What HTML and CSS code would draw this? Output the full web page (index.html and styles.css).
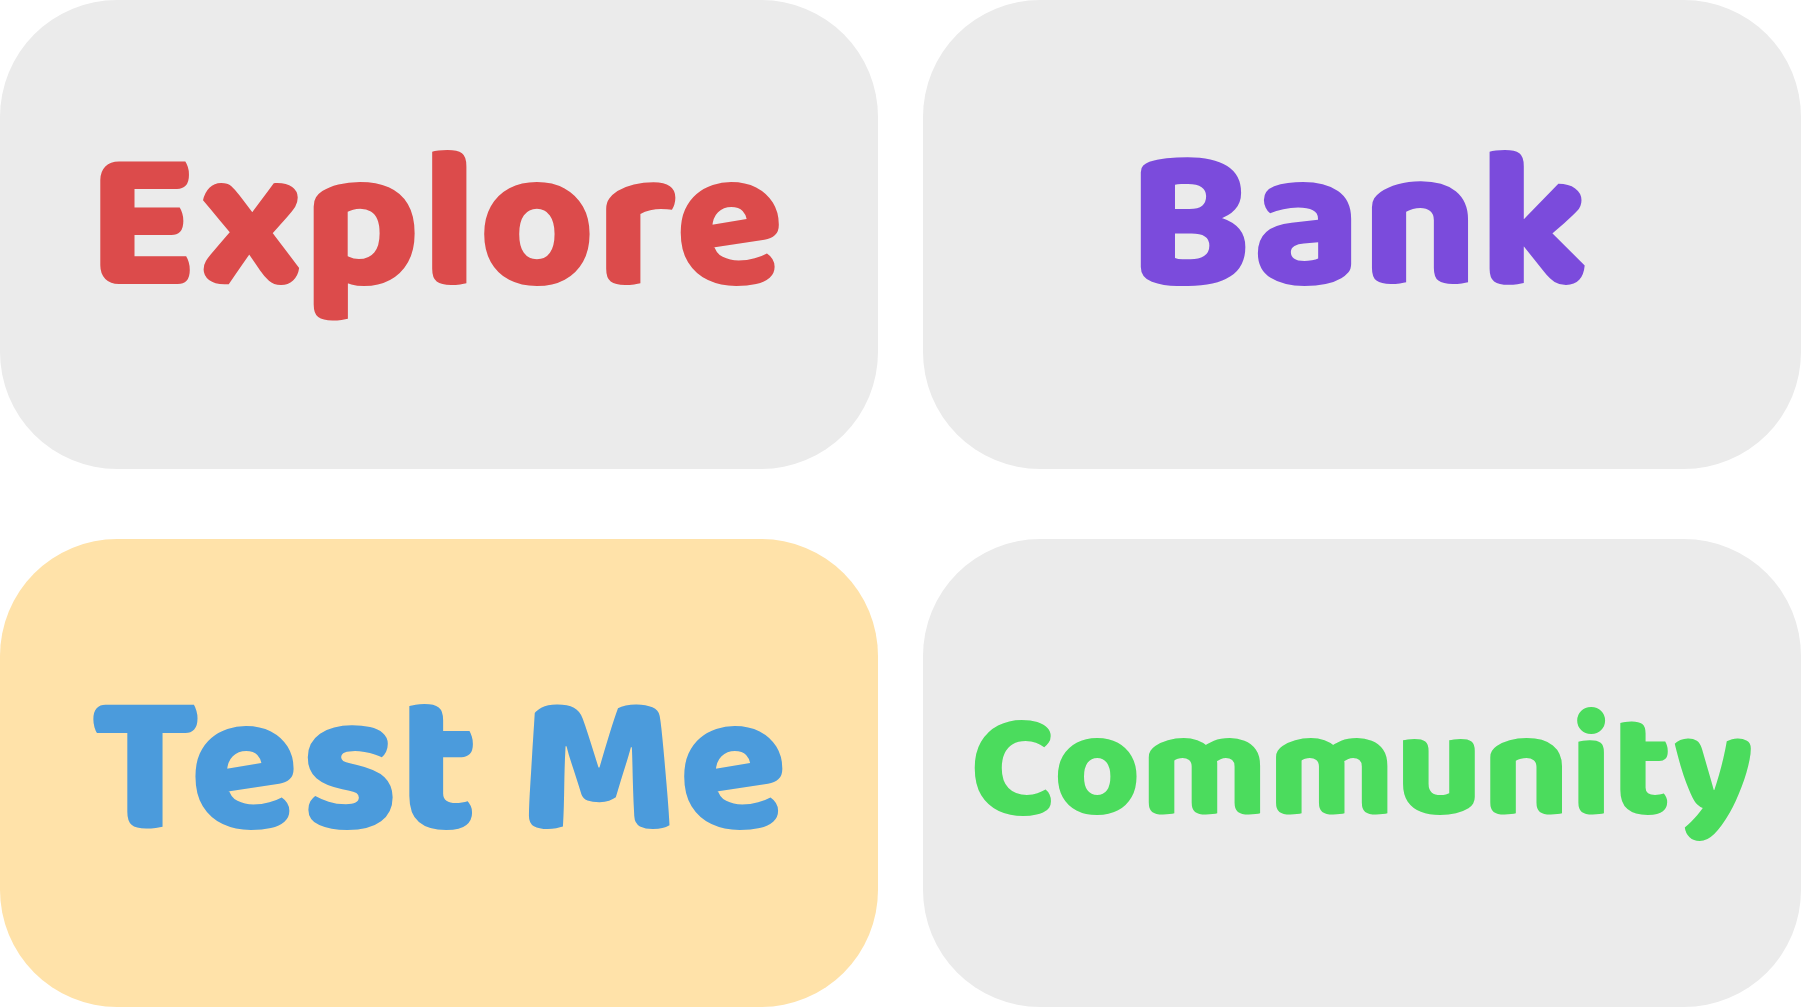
FILE: index.html
```html
<!DOCTYPE html>
<html lang="en">
<head>
    <meta charset="UTF-8">
    <meta name="viewport" content="width=device-width, initial-scale=1.0">
    <title>Menu</title>
    <link rel="stylesheet" href="styles.css">
</head>
<body>
    <main class="menu">
        <button type="button" class="tile top explore">Explore</button>
        <button type="button" class="tile top bank">Bank</button>
        <button type="button" class="tile test-me selected">Test Me</button>
        <button type="button" class="tile community">Community</button>
    </main>
</body>
</html>
```

FILE: styles.css
```css
* {
    box-sizing: border-box;
}
body {
    margin: 0;
    background-color: #fff;
}
.menu {
    display: grid;
    grid-template-columns: 1fr 1fr;
    grid-template-rows: 1fr 1fr;
    gap: 70px 45px;
    min-height: 100vh;
}
.tile {
    padding: 0 0 2px;
    border: none;
    border-radius: 117px;
    background-color: #ebebeb;
    font-family: "Baloo 2", Baloo, Lato, sans-serif;
    font-size: 201px;
    font-weight: 900;
    line-height: 1;
    cursor: pointer;
}
.top {
    padding: 0 6px 14px 0;
}
.selected {
    background-color: #ffe2a9;
}
.explore {
    color: #dc4b4b;
}
.bank {
    color: #7b4bdc;
}
.test-me {
    color: #4b9bdc;
}
.community {
    color: #4bdc5d;
    font-size: 150px;
}
```
